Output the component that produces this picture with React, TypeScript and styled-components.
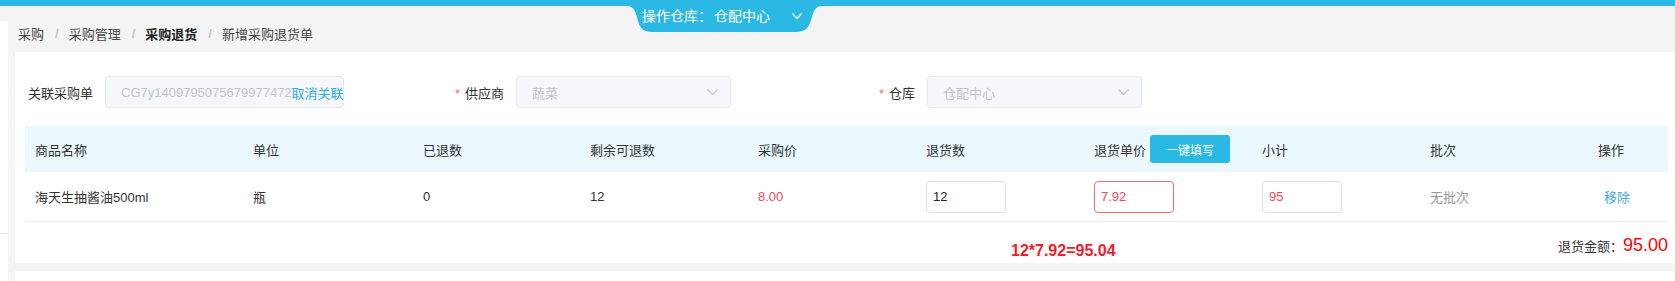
import styled, { createGlobalStyle } from 'styled-components';

const GlobalStyle = createGlobalStyle`
  html, body {
    margin: 0;
    padding: 0;
  }
  body {
    font-family: 'Liberation Sans', 'Noto Sans CJK SC', sans-serif;
    font-size: 13px;
    color: #333;
    background: #f4f4f4;
    overflow: hidden;
  }
  * {
    box-sizing: border-box;
  }
`;

const Page = styled.div`
  width: 1675px;
  height: 281px;
  display: flex;
  flex-direction: column;
  background: #f4f4f4;
  overflow: hidden;
`;

const TopBar = styled.div`
  position: relative;
  height: 6px;
  flex-shrink: 0;
  background: #2cb8e5;
  z-index: 2;
`;

const WarehouseTab = styled.div`
  position: absolute;
  left: 627px;
  top: 0;
  width: 195px;
  height: 32px;

  svg.shape {
    position: absolute;
    inset: 0;
  }
`;

const TabContent = styled.div`
  position: relative;
  height: 32px;
  display: flex;
  align-items: center;
  padding-left: 15px;
  color: #fff;
  font-size: 14px;
  line-height: 32px;

  svg {
    margin-left: 22px;
  }
`;

const TabValue = styled.span`
  margin-left: 2px;
`;

const Body = styled.div`
  flex: 1;
  display: flex;
  min-height: 0;
`;

const Sidebar = styled.div`
  width: 8px;
  flex-shrink: 0;
  margin-top: 15px;
  background: #fff;
`;

const SidebarItem = styled.div`
  height: 213px;
  border-bottom: 1px solid #e6e6e6;
`;

const Main = styled.div`
  flex: 1;
  min-width: 0;
  display: flex;
  flex-direction: column;
  padding-left: 7px;
`;

const Breadcrumb = styled.div`
  height: 46px;
  flex-shrink: 0;
  display: flex;
  align-items: center;
  padding: 8px 0 0 3px;
  font-size: 13px;
`;

const Crumb = styled.span<{ $current?: boolean }>`
  color: ${(p) => (p.$current ? '#222' : '#444')};
  font-weight: ${(p) => (p.$current ? 700 : 400)};
`;

const Separator = styled.span`
  margin: 0 10px 0 11px;
  color: #c0c4cc;
  font-weight: 700;
`;

const Card = styled.div`
  flex-shrink: 0;
  background: #fff;
  padding: 24px 7px 0 10px;
`;

const FormRow = styled.div`
  display: flex;
  align-items: center;
  height: 32px;
`;

const FormItem = styled.div`
  display: flex;
  align-items: center;
`;

const FormLabel = styled.label<{ $width: number }>`
  width: ${(p) => p.$width}px;
  padding-right: 12px;
  text-align: right;
  color: #333;
  font-size: 13px;
`;

const Required = styled.span`
  color: #f56c6c;
  margin-right: 5px;
`;

const DisabledBox = styled.div<{ $width: number }>`
  position: relative;
  width: ${(p) => p.$width}px;
  height: 32px;
  display: flex;
  align-items: center;
  padding-left: 15px;
  background: #f5f7fa;
  border: 1px solid #e4e7ed;
  border-radius: 4px;
  color: #c0c4cc;
  font-size: 13px;
  white-space: nowrap;
  overflow: hidden;

  svg {
    position: absolute;
    right: 12px;
    top: 12px;
  }
`;

const UnlinkText = styled.span`
  color: #2aaee3;
`;

const Table = styled.div`
  margin-top: 18px;
`;

const columns = '218px 170px 167px 168px 168px 168px 168px 168px 168px 1fr';

const HeadRow = styled.div`
  display: grid;
  grid-template-columns: ${columns};
  height: 46px;
  background: #eaf8fd;
  color: #333;
`;

const BodyRow = styled.div`
  display: grid;
  grid-template-columns: ${columns};
  height: 50px;
  border-bottom: 1px solid #ebeef5;
`;

const Cell = styled.div<{ $tone?: 'red' | 'muted' | 'link' }>`
  display: flex;
  align-items: center;
  padding-left: 10px;
  font-size: 13px;
  color: ${(p) =>
    p.$tone === 'red' ? '#f34a5b' : p.$tone === 'muted' ? '#999' : p.$tone === 'link' ? '#3ba8e3' : '#333'};
`;

const FillButton = styled.button`
  width: 80px;
  height: 28px;
  margin-left: 4px;
  border: none;
  border-radius: 3px;
  background: #2cb8e5;
  color: #fff;
  font-family: inherit;
  font-size: 12px;
  padding: 0;
`;

const NumInput = styled.div<{ $error?: boolean; $red?: boolean }>`
  width: 80px;
  height: 32px;
  display: flex;
  align-items: center;
  padding-left: 6px;
  border: 1px solid ${(p) => (p.$error ? '#f56c6c' : '#dcdfe6')};
  border-radius: 4px;
  color: ${(p) => (p.$red ? '#f34a5b' : '#222')};
  font-size: 13px;
`;

const RemoveLink = styled.span`
  padding-left: 6px;
`;

const Footer = styled.div`
  position: relative;
  height: 41px;
  display: flex;
  justify-content: flex-end;
  align-items: baseline;
  padding: 12px 0 0;
`;

const TotalLabel = styled.span`
  font-size: 13px;
  color: #333;
`;

const TotalValue = styled.span`
  font-size: 18px;
  line-height: 22px;
  color: #ff0000;
`;

const Formula = styled.span`
  position: absolute;
  left: 986px;
  top: 21px;
  font-size: 16px;
  line-height: 16px;
  font-weight: 700;
  color: #ee1d2b;
  text-shadow: 1px 1px 0 #fff, -1px -1px 0 #fff, 1px -1px 0 #fff, -1px 1px 0 #fff,
    0 0 3px rgba(0, 0, 0, 0.35);
`;

const LowerCard = styled.div`
  flex: 1;
  margin-top: 8px;
  background: #fff;
`;

const Chevron = ({ color, w = 11, h = 6 }: { color: string; w?: number; h?: number }) => (
  <svg width={w} height={h} viewBox={`0 0 ${w} ${h}`}>
    <polyline points={`0.5,0.5 ${w / 2},${h - 0.5} ${w - 0.5},0.5`} fill='none' stroke={color} strokeWidth='1.2' />
  </svg>
);

const headers = ['商品名称', '单位', '已退数', '剩余可退数', '采购价', '退货数'];

const App = () => (
  <Page>
    <GlobalStyle />
    <TopBar>
      <WarehouseTab>
        <svg className='shape' width='195' height='32' viewBox='0 0 195 32'>
          <path
            d='M0 0 H195 V6 C189 6 187 10 185 17 C182 27 180 32 168 32 H26 C15 32 12 27 10 17 C8 10 6 6 0 6 Z'
            fill='#2cb8e5'
          />
        </svg>
        <TabContent>
          操作仓库：<TabValue>仓配中心</TabValue>
          <Chevron color='#fff' w={10} h={6} />
        </TabContent>
      </WarehouseTab>
    </TopBar>
    <Body>
      <Sidebar>
        <SidebarItem />
      </Sidebar>
      <Main>
        <Breadcrumb>
          <Crumb>采购</Crumb>
          <Separator>/</Separator>
          <Crumb>采购管理</Crumb>
          <Separator>/</Separator>
          <Crumb $current>采购退货</Crumb>
          <Separator>/</Separator>
          <Crumb>新增采购退货单</Crumb>
        </Breadcrumb>
        <Card>
          <FormRow>
            <FormItem>
              <FormLabel $width={80}>关联采购单</FormLabel>
              <DisabledBox $width={239}>
                CG7y1409795075679977472
                <UnlinkText>取消关联</UnlinkText>
              </DisabledBox>
            </FormItem>
            <FormItem>
              <FormLabel $width={172}>
                <Required>*</Required>供应商
              </FormLabel>
              <DisabledBox $width={215}>
                蔬菜
                <Chevron color='#c0c4cc' />
              </DisabledBox>
            </FormItem>
            <FormItem>
              <FormLabel $width={196}>
                <Required>*</Required>仓库
              </FormLabel>
              <DisabledBox $width={215}>
                仓配中心
                <Chevron color='#c0c4cc' />
              </DisabledBox>
            </FormItem>
          </FormRow>
          <Table>
            <HeadRow>
              {headers.map((h) => (
                <Cell key={h}>{h}</Cell>
              ))}
              <Cell>
                退货单价
                <FillButton>一键填写</FillButton>
              </Cell>
              <Cell>小计</Cell>
              <Cell>批次</Cell>
              <Cell>操作</Cell>
            </HeadRow>
            <BodyRow>
              <Cell>海天生抽酱油500ml</Cell>
              <Cell>瓶</Cell>
              <Cell>0</Cell>
              <Cell>12</Cell>
              <Cell $tone='red'>8.00</Cell>
              <Cell>
                <NumInput>12</NumInput>
              </Cell>
              <Cell>
                <NumInput $error $red>
                  7.92
                </NumInput>
              </Cell>
              <Cell>
                <NumInput $red>95</NumInput>
              </Cell>
              <Cell $tone='muted'>无批次</Cell>
              <Cell $tone='link'>
                <RemoveLink>移除</RemoveLink>
              </Cell>
            </BodyRow>
          </Table>
          <Footer>
            <Formula>12*7.92=95.04</Formula>
            <TotalLabel>退货金额：</TotalLabel>
            <TotalValue>95.00</TotalValue>
          </Footer>
        </Card>
        <LowerCard />
      </Main>
    </Body>
  </Page>
);

export default App;
